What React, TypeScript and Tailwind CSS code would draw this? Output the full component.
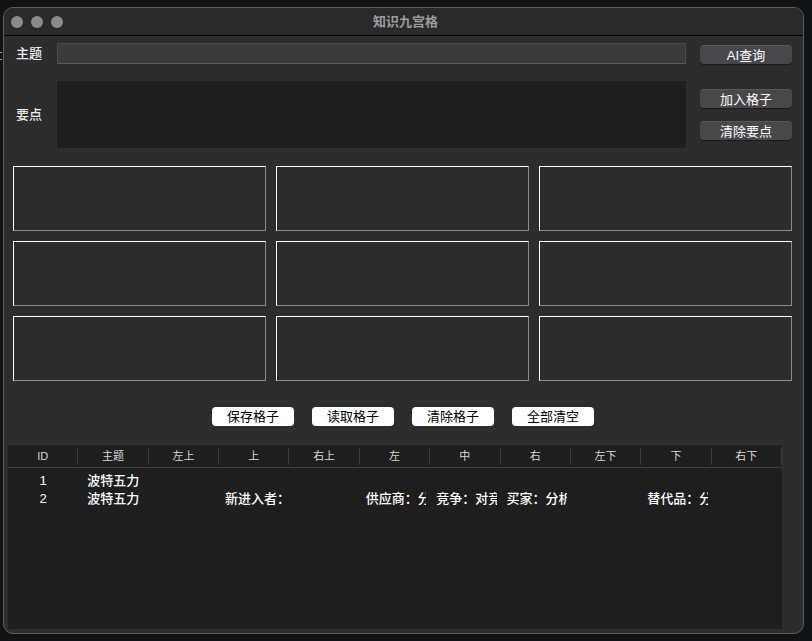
import React from "react";

const font = "font-['Liberation_Sans','Noto_Sans_CJK_SC',sans-serif]";

const headers = ["ID", "主题", "左上", "上", "右上", "左", "中", "右", "左下", "下", "右下"];

const rows: string[][] = [
  ["1", "波特五力", "", "", "", "", "", "", "", "", ""],
  ["2", "波特五力", "", "新进入者：", "", "供应商：分析供应商", "竞争：对竞争者", "买家：分析买家", "", "替代品：分析替代品", ""],
];

function GridBox() {
  return (
    <div className="h-[65px] border-t border-l border-t-white border-l-white border-b border-r border-b-[#8a8a8a] border-r-[#8a8a8a] bg-[#2d2d2d]" />
  );
}

function WhiteBtn({ label }: { label: string }) {
  return (
    <div className="w-[82px] h-[19px] rounded-[4px] bg-white text-black text-[13px] flex items-center justify-center leading-none">
      {label}
    </div>
  );
}

function DarkBtn({ label }: { label: string }) {
  return (
    <div className="w-[92px] h-[19px] rounded-[4px] bg-[#4a474c] border-t border-t-[#5a575c] text-white text-[13px] flex items-center justify-center leading-none shadow-[0_1px_1px_rgba(0,0,0,0.4)]">
      {label}
    </div>
  );
}

export default function App() {
  return (
    <div className={`relative w-[812px] h-[641px] bg-[#0f1217] overflow-hidden ${font}`}>
      <div className="absolute left-0 top-[52px] w-[2px] h-[1px] bg-[#9a9a9a]" />
      <div className="absolute left-0 top-[59px] w-[2px] h-[1px] bg-[#9a9a9a]" />
      <div className="ml-[3px] pt-[7px]">
        <div className="w-[801px] h-[627px] rounded-[10px] border border-[#5c5c5c] bg-[#2d2d2d] overflow-hidden flex flex-col">
          {/* title bar */}
          <div className="relative h-[28px] bg-[#2a2a2a] border-b border-b-black flex items-center shrink-0">
            <div className="flex gap-[8px] pl-[7px]">
              <div className="w-[12px] h-[12px] rounded-full bg-[#8a8a8a]" />
              <div className="w-[12px] h-[12px] rounded-full bg-[#8a8a8a]" />
              <div className="w-[12px] h-[12px] rounded-full bg-[#8a8a8a]" />
            </div>
            <div className="absolute inset-0 flex items-center justify-center text-[13px] font-bold text-[#9c9c9c] pl-[4px]">
              知识九宫格
            </div>
          </div>

          {/* body */}
          <div className="flex flex-col flex-1">
            {/* row 1 */}
            <div className="flex items-center mt-[7px] h-[21px] pl-[12px]">
              <div className="w-[41px] text-[13px] font-medium text-[#ececec]">主题</div>
              <div className="w-[629px] h-[21px] bg-[#3b3b3b] border border-[#4a4a4a] border-b-[#5a5a5a]" />
              <div className="ml-[14px] mt-[2px]">
                <DarkBtn label="AI查询" />
              </div>
            </div>

            {/* row 2 */}
            <div className="flex mt-[17px] h-[67px] pl-[12px]">
              <div className="w-[41px] text-[13px] font-medium text-[#ececec] flex items-center">要点</div>
              <div className="w-[629px] h-[67px] bg-[#1e1e1e]" />
              <div className="ml-[14px] flex flex-col gap-[13px] pt-[8px]">
                <DarkBtn label="加入格子" />
                <DarkBtn label="清除要点" />
              </div>
            </div>

            {/* nine grid */}
            <div className="mt-[18px] ml-[9px] w-[779px] grid grid-cols-3 gap-x-[10px] gap-y-[10px]">
              {Array.from({ length: 9 }).map((_, i) => (
                <GridBox key={i} />
              ))}
            </div>

            {/* buttons */}
            <div className="mt-[26px] ml-[208px] flex gap-[18px]">
              <WhiteBtn label="保存格子" />
              <WhiteBtn label="读取格子" />
              <WhiteBtn label="清除格子" />
              <WhiteBtn label="全部清空" />
            </div>

            {/* table */}
            <div className="mt-[18px] ml-[4px] w-[774px] h-[185px] bg-[#1e1e1e] flex flex-col">
              <div className="h-[24px] grid grid-cols-11 border-t border-t-[#333] border-b border-b-[#3d3d3d] shrink-0">
                {headers.map((h) => (
                  <div
                    key={h}
                    className="my-[3px] border-r border-r-[#3a3a3a] flex items-center justify-center text-[11px] text-[#d8d8d8]"
                  >
                    {h}
                  </div>
                ))}
              </div>
              <div className="pt-[4px]">
                {rows.map((r, ri) => (
                  <div key={ri} className="grid grid-cols-11 h-[18px]">
                    {r.map((c, ci) => (
                      <div
                        key={ci}
                        className={`min-w-0 text-[13px] font-medium text-white leading-[18px] ${
                          ci === 0 ? "text-center" : ci === 1 ? "pl-[9px] pr-[4px]" : "pl-[6px] pr-[4px]"
                        }`}
                      >
                        <div className="overflow-hidden whitespace-nowrap">{c}</div>
                      </div>
                    ))}
                  </div>
                ))}
              </div>
            </div>
          </div>
        </div>
      </div>
    </div>
  );
}
